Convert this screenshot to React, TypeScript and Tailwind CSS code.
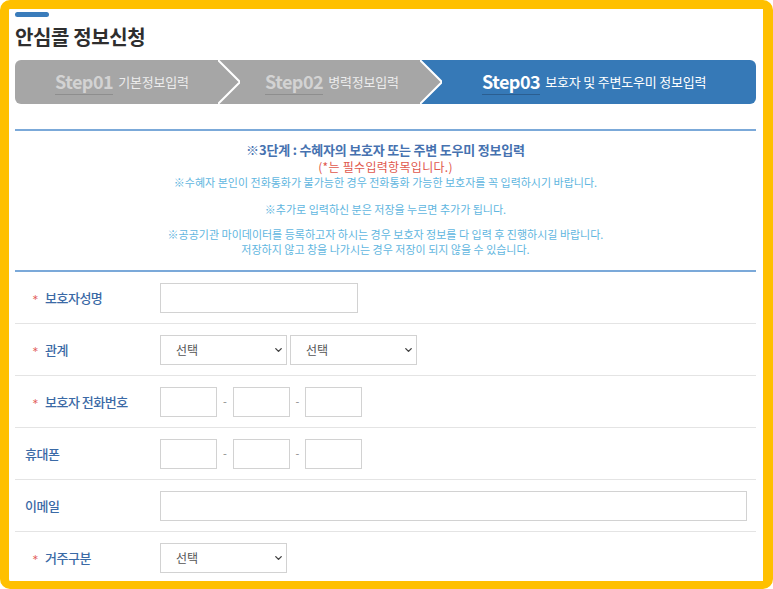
import React from 'react';
import { ChevronDown } from 'lucide-react';

const GRAY = '#a6a6a6';
const BLUE = '#3679b7';

function Sep({ left, right }: { left: string; right: string }) {
  return (
    <svg width="22" height="44" viewBox="0 0 22 44" className="shrink-0 block">
      <path d="M0 0 L22 22 L0 44 Z" fill={left} />
      <path d="M0 0 H22 V44 H0 L22 22 Z" fill={right} />
      <polyline points="0,0 22,22 0,44" fill="none" stroke="#ffffff" strokeWidth="2" />
    </svg>
  );
}

function StepLabel({ step, text, active }: { step: string; text: string; active?: boolean }) {
  return (
    <div className="flex items-center">
      <span
        className={`inline-block pb-[2px] text-[18px] leading-[22px] font-bold tracking-[-0.5px] border-b ${
          active ? 'text-white border-[#2b5e90]' : 'text-[#d3d3d3] border-[#8e8e8e]'
        }`}
      >
        {step}
      </span>
      <span className={`ml-[5px] text-[13px] tracking-[-0.2px] ${active ? 'text-white' : 'text-[#ececec]'}`}>
        {text}
      </span>
    </div>
  );
}

function Select({ w = 'w-[127px]' }: { w?: string }) {
  return (
    <div className={`relative h-[30px] ${w}`}>
      <select className="h-full w-full appearance-none border border-[#d2d2d2] bg-white pl-[15px] text-[12px] text-[#555]">
        <option>선택</option>
      </select>
      <ChevronDown size={11} strokeWidth={3} className="pointer-events-none absolute right-[3px] top-1/2 -translate-y-1/2 text-[#444]" />
    </div>
  );
}

function Input({ w }: { w: string }) {
  return <input className={`h-[30px] ${w} border border-[#d2d2d2] bg-white`} />;
}

function Phone() {
  return (
    <div className="flex items-center">
      <Input w="w-[57px]" />
      <span className="w-[16px] text-center text-[11px] text-[#888]">-</span>
      <Input w="w-[57px]" />
      <span className="w-[15px] text-center text-[11px] text-[#888]">-</span>
      <Input w="w-[57px]" />
    </div>
  );
}

function Row({ label, required, children }: { label: string; required?: boolean; children: React.ReactNode }) {
  return (
    <div className="flex h-[52px] items-center border-b border-[#e4e4e4]">
      <div className={`flex w-[145px] shrink-0 items-center ${required ? 'pl-[17px]' : 'pl-[10px]'}`}>
        {required && (
          <span className="w-[13px] font-['DejaVu_Sans',sans-serif] text-[8px] leading-none text-[#e25a5a]">∗</span>
        )}
        <span className="text-[13px] font-medium tracking-[-0.5px] text-[#3b6aa6]">{label}</span>
      </div>
      {children}
    </div>
  );
}

export default function App() {
  return (
    <div className="h-[589px] w-[773px] overflow-hidden rounded-[10px] border-b-[8px] border-l-[9px] border-r-[10px] border-t-[9px] border-[#ffc000] bg-white font-['Noto_Sans_CJK_KR',sans-serif]">
      <div className="pl-[6px] pr-[7px] pt-[3px]">
        <div className="h-[5px] w-[34px] rounded-full bg-[#3a7cbb]" />
        <h1 className="mt-[6px] text-[20px] font-bold leading-[28px] tracking-[-0.4px] text-[#2e2e2e]">안심콜 정보신청</h1>

        {/* steps */}
        <div className="mt-[9px] flex h-[44px] overflow-hidden rounded-[6px]">
          <div className="flex w-[203px] items-center pl-[40px]" style={{ background: GRAY }}>
            <StepLabel step="Step01" text="기본정보입력" />
          </div>
          <Sep left={GRAY} right={GRAY} />
          <div className="flex w-[180px] items-center pl-[25px]" style={{ background: GRAY }}>
            <StepLabel step="Step02" text="병력정보입력" />
          </div>
          <Sep left={GRAY} right={BLUE} />
          <div className="flex flex-1 items-center pl-[40px]" style={{ background: BLUE }}>
            <StepLabel step="Step03" text="보호자 및 주변도우미 정보입력" active />
          </div>
        </div>

        <div className="mt-[25px] h-[2px] bg-[#7ba9d9]" />

        {/* notice */}
        <div className="pb-[13px] pt-[9px] text-center">
          <p className="text-[13px] font-bold leading-[19px] tracking-[-0.2px] text-[#4672b0]">
            ※3단계 : 수혜자의 보호자 또는 주변 도우미 정보입력
          </p>
          <p className="text-[12px] leading-[15px] tracking-[0.3px] text-[#e0574c]">(*는 필수입력항목입니다.)</p>
          <p className="text-[11px] leading-[17px] text-[#5fb6e0]">
            ※수혜자 본인이 전화통화가 불가능한 경우 전화통화 가능한 보호자를 꼭 입력하시기 바랍니다.
          </p>
          <p className="mt-[9px] text-[11px] leading-[18px] text-[#5fb6e0]">
            ※추가로 입력하신 분은 저장을 누르면 추가가 됩니다.
          </p>
          <p className="mt-[9px] text-[11px] leading-[15px] text-[#5fb6e0]">
            ※공공기관 마이데이터를 등록하고자 하시는 경우 보호자 정보를 다 입력 후 진행하시길 바랍니다.
            <br />
            저장하지 않고 창을 나가시는 경우 저장이 되지 않을 수 있습니다.
          </p>
        </div>

        <div className="h-[2px] bg-[#7ba9d9]" />

        {/* form */}
        <Row label="보호자성명" required>
          <Input w="w-[198px]" />
        </Row>
        <Row label="관계" required>
          <div className="flex gap-[3px]">
            <Select />
            <Select />
          </div>
        </Row>
        <Row label="보호자 전화번호" required>
          <Phone />
        </Row>
        <Row label="휴대폰">
          <Phone />
        </Row>
        <Row label="이메일">
          <Input w="w-[587px]" />
        </Row>
        <Row label="거주구분" required>
          <Select />
        </Row>
      </div>
    </div>
  );
}
